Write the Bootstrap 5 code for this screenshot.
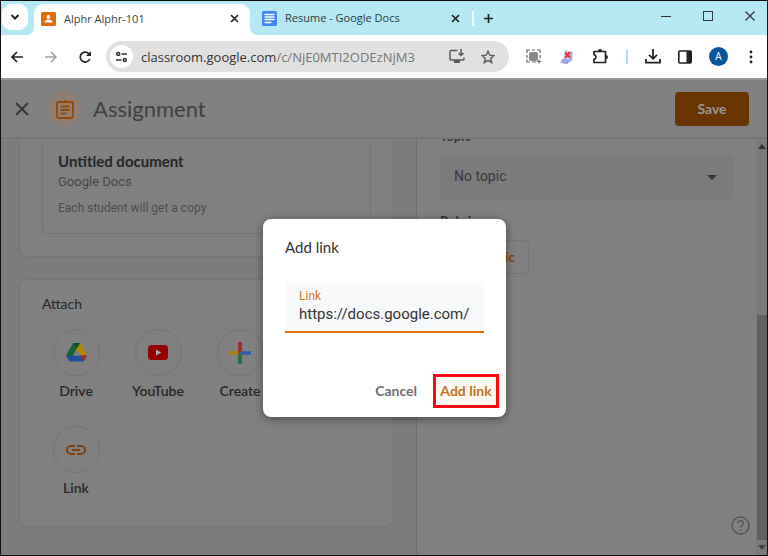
<!DOCTYPE html>
<html lang="en">
<head>
<meta charset="utf-8">
<meta name="viewport" content="width=device-width, initial-scale=1">
<title>Alphr Alphr-101</title>
<link href="https://cdn.jsdelivr.net/npm/bootstrap@5.3.0/dist/css/bootstrap.min.css" rel="stylesheet">
<style>
  :root { --ui: "Open Sans", "Noto Sans", sans-serif; --body: Roboto, sans-serif; --head: Lato, sans-serif; --line: #757575; }
  body { font-family: var(--body); font-size: 14px; background: #808080; color: #303134; }
  button, input, select { font: inherit; color: inherit; }
  svg { display: block; flex: none; }
  .window { border: 1px solid #111; }
  .plain { background: none; border: 0; padding: 0; display: block; }

  .tabstrip { background: #b5e8f2; height: 34px; font: 11px/16px var(--ui); color: #2b3a3f; padding: 0 12px 0 1px; }
  .tab-search { background: #fff; border-radius: 9px; width: 26px; height: 26px; margin-top: 3px; }
  .tab-open { background: #fff; border-radius: 9px 9px 0 0; width: 216px; margin: 3px 0 0 6px; padding: 0 11px 2px 7px; position: relative; color: #3c3f43; }
  .tab-open::before, .tab-open::after { content: ""; position: absolute; bottom: 0; width: 8px; height: 8px; }
  .tab-open::before { left: -8px; background: radial-gradient(circle at 0 0, transparent 8px, #fff 8px); }
  .tab-open::after { right: -8px; background: radial-gradient(circle at 100% 0, transparent 8px, #fff 8px); }
  .tab-idle { width: 198px; margin-left: 12px; }
  .tab-rule { width: 2px; height: 15px; background: #fff; margin: 0 9px 0 12px; }

  .toolbar { background: #fff; height: 43px; padding: 0 14px 0 9px; color: #2b2b2b; }
  .address { background: #e1e1e1; border-radius: 16px; height: 31px; margin-left: 14px; padding: 0 14px 0 4px; flex: 1 1 0; font: 13px/20px var(--ui); color: #333; }
  .address .path { color: #757575; }
  .site-info { background: #fff; border-radius: 50%; width: 23px; height: 23px; }
  .tools { gap: 17px; margin-left: 17px; }
  .avatar { width: 19px; height: 19px; border-radius: 50%; background: #0657a0; color: #fff; font: 10px/19px var(--ui); }

  .page { position: relative; border-top: 2px solid #969696; }
  .topbar { height: 59px; border-bottom: 2px solid #767676; padding: 0 18px 0 14px; }
  .badge-round { width: 34px; height: 34px; border-radius: 50%; background: #8e7e74; margin: 0 11px 0 19px; }
  .topbar h1 { font: 22px/28px var(--head); color: #3c4043; }
  .save { background: #693500; color: #999; border: 0; border-radius: 4px; width: 74px; height: 34px; font: 700 14px/20px var(--head); }

  .cols { display: grid; grid-template-columns: 416fr 339fr 11px; flex: 1 1 0; min-height: 0; overflow: hidden; }
  .left { background: #7c7c7c; border-right: 1px solid #707070; padding: 0 22px 0 18px; }
  .panel { background: #808080; border: 1px solid var(--line); border-radius: 8px; }
  .panel-work { border-top: 0; border-radius: 0 0 8px 8px; padding: 0 22px 22px; margin-bottom: 22px; }
  .attachment { border: 1px solid var(--line); border-top: 0; border-radius: 0 0 6px 6px; padding: 12px 15px 16px; height: 95px; }
  .attachment h2 { font: 700 15px/20px var(--head); color: #262626; margin: 0; }
  .attachment .kind { font-size: 13px; line-height: 22px; color: #454545; }
  .attachment .note { font-size: 12px; line-height: 16px; color: #4c4c4c; margin-top: 7px; }
  .panel-attach { padding: 15px 15px 29px; }
  .panel-attach h2 { font: 14px/18px var(--head); color: #262626; margin: 0 0 16px 7px; }
  .sources { display: grid; grid-template-columns: repeat(4, 82px); row-gap: 26px; }
  .source { font: 600 14px/18px var(--head); color: #262626; text-align: center; }
  .source .ring { width: 47px; height: 47px; border: 1px solid var(--line); border-radius: 50%; margin: 0 auto 6px; }
  .source-link { grid-column: 1; }

  .right { padding: 0 23px; }
  .right label, .right .caption { font: 700 13px/18px var(--head); color: #303134; }
  .right label { margin-top: -12px; margin-bottom: 10px; }
  .topic { position: relative; margin-bottom: 12px; }
  .topic select { appearance: none; width: 100%; height: 45px; border: 0; border-radius: 3px; background: #7b7b7b; padding: 0 14px 2px; color: #37383a; }
  .topic svg { position: absolute; right: 16px; top: 20px; pointer-events: none; }
  .rubric { background: none; border: 1px solid var(--line); border-radius: 4px; width: 89px; height: 34px; margin-top: 10px; padding: 0 13px; color: #854400; font: 700 14px/20px var(--head); text-align: right; }
  .scroll { background: #7a7a7a; padding: 5px 0 5px 1px; }
  .thumb { background: #616161; margin-top: 166px; width: 10px; flex: 1 1 0; margin-bottom: 5px; }
  .help { position: absolute; right: 17px; bottom: 20px; }

  .layer { position: absolute; inset: 1px 0 0 1px; pointer-events: none; }
  .dialog-box { pointer-events: auto; width: 243px; background: #fff; border-radius: 8px; padding: 18px 7px 9px 22px; box-shadow: 0 2px 8px rgba(0,0,0,.45); }
  .dialog-box h2 { font: 15px/20px var(--head); color: #333; margin: 0 0 24px; }
  .field { background: #f8f9fa; border-bottom: 2px solid #e8710a; border-radius: 4px 4px 0 0; height: 52px; padding: 7px 14px 0; margin-right: 15px; }
  .field label { display: block; font-size: 12px; line-height: 16px; color: #d27a25; }
  .field input { display: block; width: 100%; border: 0; padding: 0; outline: 0; background: none; font-size: 15px; line-height: 20px; color: #333; }
  .actions { margin-top: 41px; gap: 16px; font: 700 14px/20px var(--head); }
  .cancel { color: #6b7075; }
  .confirm { border: 3px solid #f80b10; background: #fef8f3; color: #c6721c; width: 66px; height: 34px; }
</style>
<script src="https://cdn.jsdelivr.net/npm/bootstrap@5.3.0/dist/js/bootstrap.bundle.min.js"></script>
</head>
<body>
<div class="window vh-100 d-flex flex-column overflow-hidden">
  <header>
    <div class="tabstrip d-flex">
      <button class="plain tab-search d-flex align-items-center justify-content-center" aria-label="Search tabs">
        <svg width="10" height="8" viewBox="0 0 10 8"><path d="M1.5 2l3.500 3.500L8.500 2" fill="none" stroke="#222" stroke-width="2"/></svg>
      </button>
      <div class="tab-open d-flex align-items-center">
        <svg width="15" height="14" viewBox="0 0 15 14"><rect width="15" height="14" rx="1.500" fill="#df6c0c"/><circle cx="7.500" cy="5" r="1.900" fill="#fff"/><path d="M3.500 10.500c0-2 2-3 4-3s4 1 4 3z" fill="#fff"/></svg>
        <span class="ms-2 me-auto text-nowrap">Alphr Alphr-101</span>
        <button class="plain" aria-label="Close tab"><svg width="9" height="9" viewBox="0 0 9 9"><path d="M1 1l7 7M8 1L1 8" stroke="#222" stroke-width="1.700"/></svg></button>
      </div>
      <div class="tab-idle d-flex align-items-center">
        <svg width="15" height="15" viewBox="0 0 15 15"><rect width="15" height="15" rx="1.500" fill="#4285f4"/><path d="M2.500 3.500h10M2.500 6h10M2.500 8.500h10M2.500 11.500h7" stroke="#fff" stroke-width="1.400"/></svg>
        <span class="ms-2 me-auto text-nowrap">Resume - Google Docs</span>
        <button class="plain" aria-label="Close tab"><svg width="9" height="9" viewBox="0 0 9 9"><path d="M1 1l7 7M8 1L1 8" stroke="#222" stroke-width="1.700"/></svg></button>
      </div>
      <div class="d-flex align-items-center flex-grow-1">
        <span class="tab-rule"></span>
        <button class="plain" aria-label="New tab"><svg width="11" height="11" viewBox="0 0 11 11"><path d="M5.500 1v9M1 5.500h9" stroke="#222" stroke-width="1.700"/></svg></button>
        <div class="ms-auto d-flex align-items-center pb-1">
          <button class="plain" aria-label="Minimize"><svg width="10" height="10" viewBox="0 0 10 10"><path d="M0 5.500h10" stroke="#333"/></svg></button>
          <button class="plain mx-4 px-2" aria-label="Maximize"><svg width="10" height="10" viewBox="0 0 10 10"><rect x=".5" y=".5" width="9" height="9" fill="none" stroke="#333"/></svg></button>
          <button class="plain" aria-label="Close"><svg width="10" height="10" viewBox="0 0 10 10"><path d="M.5.5l9 9M9.500.5l-9 9" stroke="#333" stroke-width="1.200"/></svg></button>
        </div>
      </div>
    </div>
    <nav class="toolbar d-flex align-items-center" aria-label="Browser">
      <button class="plain" aria-label="Back"><svg width="14" height="14" viewBox="0 0 14 14"><path d="M13 7H2.500M7 2L2 7l5 5" fill="none" stroke="#222" stroke-width="1.700"/></svg></button>
      <button class="plain ms-3 ps-1" aria-label="Forward"><svg width="14" height="14" viewBox="0 0 14 14"><path d="M1 7h10.500M7 2l5 5-5 5" fill="none" stroke="#a0a0a0" stroke-width="1.500"/></svg></button>
      <button class="plain ms-3 ps-1" aria-label="Reload"><svg width="14" height="14" viewBox="0 0 14 14"><path d="M11.800 9A5 5 0 1 1 10.900 3.700l1.400 1.500" fill="none" stroke="#222" stroke-width="1.700"/><path d="M12.900 1v5H8z" fill="#222"/></svg></button>
      <div class="address d-flex align-items-center">
        <button class="plain site-info d-flex align-items-center justify-content-center" aria-label="Site information"><svg width="13" height="12" viewBox="0 0 13 12"><g fill="none" stroke="#333" stroke-width="1.500"><circle cx="3.200" cy="3" r="1.500"/><path d="M6.500 3H12M1 9h5.500"/><circle cx="9.800" cy="9" r="1.500"/></g></svg></button>
        <span class="ms-2 me-auto text-nowrap">classroom.google.com<span class="path">/c/NjE0MTI2ODEzNjM3</span></span>
        <button class="plain" aria-label="Install app"><svg width="16" height="15" viewBox="0 0 16 15"><path d="M8.500 1.500H2q-1 0-1 1V10q0 1 1 1h12q1 0 1-1V8.500" fill="none" stroke="#5a5a5a" stroke-width="1.500"/><path d="M5 11h6v3H5z" fill="#5a5a5a"/><path d="M12 0v6M9.500 4L12 6.500 14.500 4" fill="none" stroke="#5a5a5a" stroke-width="1.500"/></svg></button>
        <button class="plain ms-3" aria-label="Bookmark"><svg width="14" height="14" viewBox="0 0 14 14"><path d="M7 1.300l1.700 3.900 4.200.4-3.200 2.800 1 4.200L7 10.400l-3.700 2.200 1-4.200L1.100 5.600l4.200-.4z" fill="none" stroke="#5a5a5a" stroke-width="1.400"/></svg></button>
      </div>
      <div class="tools d-flex align-items-center">
        <button class="plain" aria-label="Screen capture"><svg width="16" height="15" viewBox="0 0 16 15"><rect x="3" y="3" width="9" height="9" rx="2" fill="#888"/><path d="M1 4V1h3M6 1h3M11 1h3v3M1 6v3M1 10.500V13h3M6 13h4M14 6v3M13 10.500v4M11 12.500h4" fill="none" stroke="#666" stroke-width="1.200"/></svg></button>
        <button class="plain" aria-label="Blocked extension"><svg width="16" height="16" viewBox="0 0 16 16"><path d="M6 1l8 2-1 9-6 3-6-1 1-3 3-2z" fill="#c5c8fb"/><path d="M3 11l8 1M3 13l6 1M12 3v8" stroke="#8b94e8" stroke-width="1.300"/><path d="M6 3.500l5 5M11 3L6 9" stroke="#e33" stroke-width="2"/></svg></button>
        <button class="plain" aria-label="Extensions"><svg width="17" height="17" viewBox="0 0 17 17"><path d="M2 3.500h11.500v11H2v-3.200c2.600-.5 2.600-4 0-4.600z" fill="none" stroke="#222" stroke-width="1.700" stroke-linejoin="round"/><path d="M6 3a2 2 0 0 1 4 0zM14 7a2 2 0 0 1 0 4z" fill="#222"/></svg></button>
        <svg width="2" height="15" viewBox="0 0 2 15"><path d="M1 0v15" stroke="#a9e3f2" stroke-width="2"/></svg>
        <button class="plain" aria-label="Downloads"><svg width="16" height="15" viewBox="0 0 16 15"><path d="M8 0v9.500M4 5.800l4 4 4-4M1 10v3.700h14V10" fill="none" stroke="#222" stroke-width="1.800"/></svg></button>
        <button class="plain" aria-label="Side panel"><svg width="14" height="14" viewBox="0 0 14 14"><rect x=".8" y="1" width="12.400" height="12" rx="1" fill="none" stroke="#222" stroke-width="1.600"/><path d="M8.500 1H13v12H8.500z" fill="#222"/></svg></button>
        <button class="plain avatar text-center" aria-label="Account">A</button>
        <button class="plain ms-1" aria-label="Menu"><svg width="4" height="14" viewBox="0 0 4 14"><g fill="#222"><circle cx="2" cy="2" r="1.400"/><circle cx="2" cy="7" r="1.400"/><circle cx="2" cy="12" r="1.400"/></g></svg></button>
      </div>
    </nav>
  </header>

  <main class="page d-flex flex-column flex-grow-1">
    <div class="topbar d-flex align-items-center">
      <button class="plain" aria-label="Close assignment"><svg width="14" height="14" viewBox="0 0 14 14"><path d="M1 1l12 12M13 1L1 13" stroke="#333639" stroke-width="1.900"/></svg></button>
      <span class="badge-round d-flex align-items-center justify-content-center"><svg width="18" height="20" viewBox="0 0 18 20"><rect x="1" y="3" width="16" height="16" rx="1.500" fill="none" stroke="#994700" stroke-width="1.800"/><path d="M5.500 3.500c.3-1 1.200-1 1.700-1.500a2.200 2.200 0 0 1 3.600 0c.5.500 1.400.5 1.700 1.500z" fill="#994700"/><path d="M4.500 7.500h9M4.500 11h9M4.500 14.500h6" stroke="#994700" stroke-width="1.800"/></svg></span>
      <h1 class="m-0 me-auto">Assignment</h1>
      <button class="save">Save</button>
    </div>

    <div class="cols">
      <section class="left">
        <div class="panel panel-work">
          <article class="attachment">
            <h2>Untitled document</h2>
            <div class="kind">Google Docs</div>
            <div class="note">Each student will get a copy</div>
          </article>
        </div>
        <div class="panel panel-attach">
          <h2>Attach</h2>
          <div class="sources">
            <button class="plain source"><span class="ring d-flex align-items-center justify-content-center"><svg width="21" height="19" viewBox="0 0 21 19"><path d="M7 0h7l-3.500 6.200L3.600 18.500 0 12.500z" fill="#17642f"/><path d="M7 0h7l7 12.500h-7z" fill="#b58500"/><path d="M7 0h7l-3.500 6z" fill="#0d4d24"/><path d="M0 12.500h14l-3.500 6h-7z" fill="#204f9f"/><path d="M14 12.500h7l-3.500 6h-7z" fill="#204f9f"/><path d="M14 12.500h7l-3.500 6z" fill="#a02c20"/><path d="M10.500 6.300L14 12.500H7z" fill="#808080"/></svg></span>Drive</button>
            <button class="plain source"><span class="ring d-flex align-items-center justify-content-center"><svg width="20" height="15" viewBox="0 0 20 15"><rect width="20" height="15" rx="3.500" fill="#960000"/><path d="M8 4.500l5.200 3L8 10.500z" fill="#aaa"/></svg></span>YouTube</button>
            <button class="plain source"><span class="ring d-flex align-items-center justify-content-center"><svg width="22" height="22" viewBox="0 0 22 22"><path d="M9.200 0h3.600v9.200L9.200 12.800z" fill="#a02c20"/><path d="M12.800 9.200H22v3.600h-9.200L9.200 12.800z" fill="#2c5bad"/><path d="M9.200 12.800h3.600V22H9.200z" fill="#1a6e35"/><path d="M0 9.200h9.200v3.600H0z" fill="#ac8108"/></svg></span>Create</button>
            <button class="plain source source-link"><span class="ring d-flex align-items-center justify-content-center"><svg width="20" height="10" viewBox="0 0 20 10"><path d="M9 1H5a4 4 0 0 0 0 8h4M11 1h4a4 4 0 0 1 0 8h-4M6 5h8" fill="none" stroke="#7f3f0c" stroke-width="2"/></svg></span>Link</button>
          </div>
        </div>
      </section>
      <section class="right">
        <label class="d-block" for="topic">Topic</label>
        <div class="topic">
          <select id="topic"><option>No topic</option></select>
          <svg width="10" height="5" viewBox="0 0 10 5"><path d="M0 0h10L5 5z" fill="#333639"/></svg>
        </div>
        <div class="caption">Rubric</div>
        <button class="rubric">+ Rubric</button>
      </section>
      <div class="scroll d-flex flex-column align-items-center" aria-hidden="true">
        <svg width="8" height="5" viewBox="0 0 8 5"><path d="M0 5h8L4 0z" fill="#333"/></svg>
        <div class="thumb"></div>
        <svg width="8" height="5" viewBox="0 0 8 5"><path d="M0 0h8L4 5z" fill="#444"/></svg>
      </div>
    </div>

    <button class="plain help" aria-label="Help"><svg width="19" height="19" viewBox="0 0 19 19"><circle cx="9.500" cy="9.500" r="8.500" fill="none" stroke="#51565b" stroke-width="1.500"/><path d="M6.800 7.500a2.700 2.700 0 1 1 4.400 2c-1 .8-1.700 1.200-1.700 2.500M9.500 13.300v1.700" fill="none" stroke="#51565b" stroke-width="1.500"/></svg></button>

    <div class="layer d-flex align-items-center justify-content-center">
      <form class="dialog-box" role="dialog" aria-labelledby="dialog-title">
        <h2 id="dialog-title">Add link</h2>
        <div class="field">
          <label for="link-url">Link</label>
          <input id="link-url" type="text" value="https://docs.google.com/">
        </div>
        <div class="actions d-flex align-items-center justify-content-end">
          <button type="button" class="plain cancel">Cancel</button>
          <button type="button" class="plain confirm text-nowrap">Add link</button>
        </div>
      </form>
    </div>
  </main>
</div>
</body>
</html>
